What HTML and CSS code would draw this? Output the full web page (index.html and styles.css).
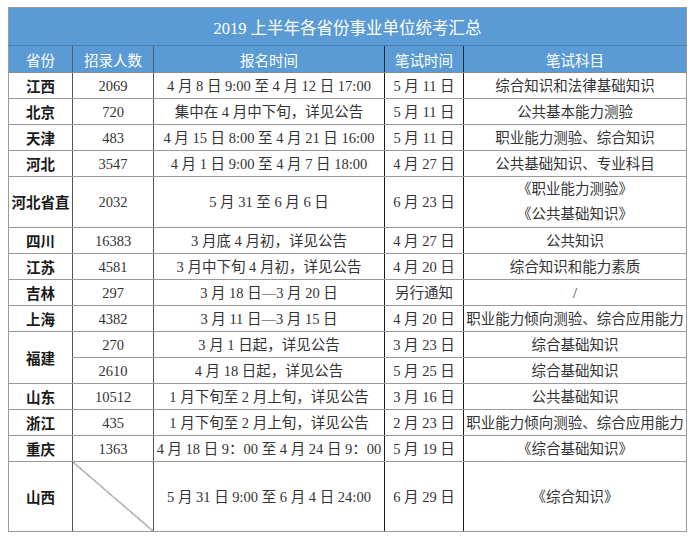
FILE: index.html
```html
<!DOCTYPE html>
<html lang="zh-CN">
<head>
<meta charset="utf-8">
<title>2019 上半年各省份事业单位统考汇总</title>
<link rel="stylesheet" href="styles.css">
</head>
<body>
<table class="sheet">
  <colgroup>
    <col class="c1"><col class="c2"><col class="c3"><col class="c4"><col class="c5">
  </colgroup>
  <thead>
    <tr class="title-row"><th colspan="5" class="title">2019 上半年各省份事业单位统考汇总</th></tr>
    <tr class="head-row">
      <th class="h h1">省份</th>
      <th class="h h2">招录人数</th>
      <th class="h h3">报名时间</th>
      <th class="h h4">笔试时间</th>
      <th class="h h5">笔试科目</th>
    </tr>
  </thead>
  <tbody>
    <tr class="row"><td class="prov">江西</td><td class="num">2069</td><td class="d3">4 月 8 日 9:00 至 4 月 12 日 17:00</td><td class="d4">5 月 11 日</td><td class="d5">综合知识和法律基础知识</td></tr>
    <tr class="row"><td class="prov">北京</td><td class="num">720</td><td class="d3">集中在 4 月中下旬，详见公告</td><td class="d4">5 月 11 日</td><td class="d5">公共基本能力测验</td></tr>
    <tr class="row"><td class="prov">天津</td><td class="num">483</td><td class="d3">4 月 15 日 8:00 至 4 月 21 日 16:00</td><td class="d4">5 月 11 日</td><td class="d5">职业能力测验、综合知识</td></tr>
    <tr class="row"><td class="prov">河北</td><td class="num">3547</td><td class="d3">4 月 1 日 9:00 至 4 月 7 日 18:00</td><td class="d4">4 月 27 日</td><td class="d5">公共基础知识、专业科目</td></tr>
    <tr class="row tall"><td class="prov">河北省直</td><td class="num">2032</td><td class="d3">5 月 31 至 6 月 6 日</td><td class="d4">6 月 23 日</td><td class="d5 two">《职业能力测验》<br>《公共基础知识》</td></tr>
    <tr class="row"><td class="prov">四川</td><td class="num">16383</td><td class="d3">3 月底 4 月初，详见公告</td><td class="d4">4 月 27 日</td><td class="d5">公共知识</td></tr>
    <tr class="row"><td class="prov">江苏</td><td class="num">4581</td><td class="d3">3 月中下旬 4 月初，详见公告</td><td class="d4">4 月 20 日</td><td class="d5">综合知识和能力素质</td></tr>
    <tr class="row"><td class="prov">吉林</td><td class="num">297</td><td class="d3">3 月 18 日—3 月 20 日</td><td class="d4">另行通知</td><td class="d5">/</td></tr>
    <tr class="row"><td class="prov">上海</td><td class="num">4382</td><td class="d3">3 月 11 日—3 月 15 日</td><td class="d4">4 月 20 日</td><td class="d5">职业能力倾向测验、综合应用能力</td></tr>
    <tr class="row"><td class="prov" rowspan="2">福建</td><td class="num">270</td><td class="d3">3 月 1 日起，详见公告</td><td class="d4">3 月 23 日</td><td class="d5">综合基础知识</td></tr>
    <tr class="row"><td class="num">2610</td><td class="d3">4 月 18 日起，详见公告</td><td class="d4">5 月 25 日</td><td class="d5">综合基础知识</td></tr>
    <tr class="row"><td class="prov">山东</td><td class="num">10512</td><td class="d3">1 月下旬至 2 月上旬，详见公告</td><td class="d4">3 月 16 日</td><td class="d5">公共基础知识</td></tr>
    <tr class="row"><td class="prov">浙江</td><td class="num">435</td><td class="d3">1 月下旬至 2 月上旬，详见公告</td><td class="d4">2 月 23 日</td><td class="d5">职业能力倾向测验、综合应用能力</td></tr>
    <tr class="row"><td class="prov">重庆</td><td class="num">1363</td><td class="d3">4 月 18 日 9：00 至 4 月 24 日 9：00</td><td class="d4">5 月 19 日</td><td class="d5">《综合基础知识》</td></tr>
    <tr class="row last"><td class="prov">山西</td><td class="num diag"></td><td class="d3">5 月 31 日 9:00 至 6 月 4 日 24:00</td><td class="d4">6 月 29 日</td><td class="d5">《综合知识》</td></tr>
  </tbody>
</table>
</body>
</html>
```

FILE: styles.css
```css
html, body {
  background: #ffffff;
}
body {
  margin: 7px 0 0 8px;
  font-family: "Liberation Serif", "Noto Sans CJK SC", serif;
  color: #222;
}
.sheet {
  border-collapse: collapse;
  table-layout: fixed;
  width: 678px;
  border: 1px solid #9a9a9a;
}
.c1 { width: 64px; }
.c2 { width: 81px; }
.c3 { width: 231px; }
.c4 { width: 79px; }
.c5 { width: 223px; }

.title {
  height: 37px;
  padding: 0;
  background: #5b9bd5;
  color: #ffffff;
  font-family: "Liberation Serif", "Noto Sans CJK SC", serif;
  font-weight: 400;
  font-size: 16.5px;
  text-align: center;
  border: 1px solid #9a9a9a;
  border-bottom: 1px solid #4a7fb0;
}
.h {
  height: 26px;
  padding: 0;
  background: #5b9bd5;
  color: #ffffff;
  font-family: "Noto Sans CJK SC", sans-serif;
  font-weight: 400;
  font-size: 14.5px;
  text-align: center;
  border-left: 1px solid #4d5f75;
  border-bottom: 1px solid #8a8a8a;
}
.h1 { border-left: 1px solid #9a9a9a; }
.h4, .h5 { border-left: 1px solid #1e2a36; }

.row td {
  height: 25px;
  padding: 0;
  text-align: center;
  vertical-align: middle;
  white-space: nowrap;
  font-size: 14.5px;
  line-height: 18px;
  border-bottom: 1px solid #9a9a9a;
  border-left: 1px solid #555;
}
.row.tall td { height: 50px; }
.row.last td { height: 69px; border-bottom: 1px solid #9a9a9a; }

.row td.prov {
  font-family: "Noto Sans CJK SC", sans-serif;
  font-weight: 700;
  color: #1a1a1a;
  border-left: 1px solid #9a9a9a;
}
.row td.num { color: #333; }
.row td.d3 { color: #333; letter-spacing: 0; }
.row td.d4 { color: #333; border-left: 1px solid #1a1a1a; }
.row td.d5 { color: #333; border-left: 1px solid #1a1a1a; }
.row td.two { line-height: 25px; }

.row td.diag {
  background: linear-gradient(to top right, transparent calc(50% - 0.6px), #333 50%, transparent calc(50% + 0.6px));
}
```
